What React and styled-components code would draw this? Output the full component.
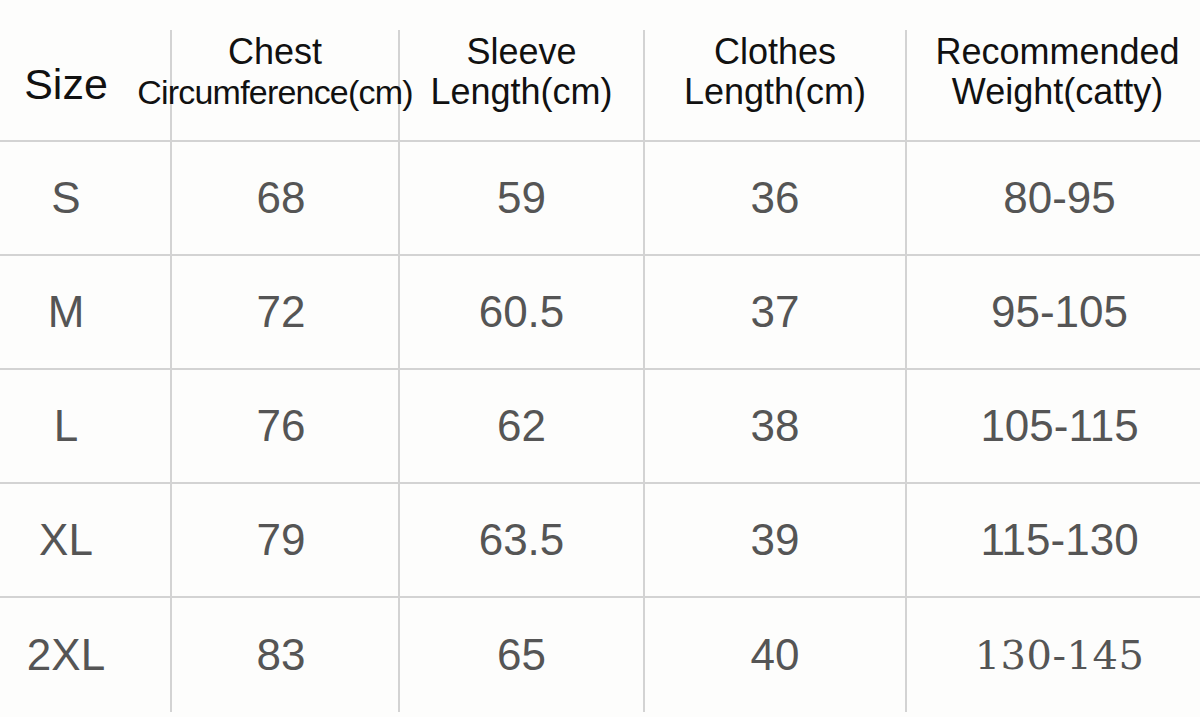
import React from 'react'
import styled, { createGlobalStyle } from 'styled-components'

const GlobalStyle = createGlobalStyle`
  html, body {
    margin: 0;
    padding: 0;
    background: #fdfdfc;
  }
  body {
    font-family: 'Liberation Sans', Arial, sans-serif;
    width: 1200px;
    height: 717px;
    overflow: hidden;
  }
`

const columns = '170px 228px 245px 262px 295px'
const line = '#d3d3d3'

const rows = [
  ['S', '68', '59', '36', '80-95'],
  ['M', '72', '60.5', '37', '95-105'],
  ['L', '76', '62', '38', '105-115'],
  ['XL', '79', '63.5', '39', '115-130'],
  ['2XL', '83', '65', '40', '130-145'],
]

const App = () => {
  return (
    <>
      <GlobalStyle />
      <Chart>
        <HeadRow>
          <SizeHead>Size</SizeHead>
          <HeadCell $shift={-10}>
            <span>Chest</span>
            <Squeezed>Circumference(cm)</Squeezed>
          </HeadCell>
          <HeadCell>
            <span>Sleeve</span>
            <span>Length(cm)</span>
          </HeadCell>
          <HeadCell>
            <span>Clothes</span>
            <span>Length(cm)</span>
          </HeadCell>
          <HeadCell $shift={4}>
            <span>Recommended</span>
            <span>Weight(catty)</span>
          </HeadCell>
        </HeadRow>
        {rows.map((row, i) => (
          <Row key={row[0]} $last={i === rows.length - 1}>
            {row.map((value, j) => (
              <Cell
                key={j}
                $first={j === 0}
                $serif={i === rows.length - 1 && j === 4}
                $shift={j === 4 ? 6 : j === 1 ? -4 : 0}
              >
                {value}
              </Cell>
            ))}
          </Row>
        ))}
      </Chart>
    </>
  )
}

const Chart = styled.div`
  width: 1200px;
  display: flex;
  flex-direction: column;
`

const HeadRow = styled.div`
  display: grid;
  grid-template-columns: ${columns};
  height: 142px;
  border-bottom: 2px solid ${line};
  box-sizing: border-box;
`

const HeadCell = styled.div`
  margin-top: 30px;
  border-left: 2px solid ${line};
  display: flex;
  flex-direction: column;
  align-items: center;
  justify-content: center;
  padding-bottom: 26px;
  padding-left: ${(p) => (p.$shift > 0 ? p.$shift * 2 : 0)}px;
  padding-right: ${(p) => (p.$shift < 0 ? -p.$shift * 2 : 0)}px;
  font-size: 36px;
  line-height: 40px;
  color: #111;
  white-space: nowrap;
`

/* wider than its column: drawn above the neighbouring rules */
const Squeezed = styled.span`
  position: relative;
  z-index: 1;
  font-size: 34px;
  letter-spacing: -0.8px;
`

const SizeHead = styled.div`
  display: flex;
  align-items: center;
  justify-content: center;
  padding: 28px 38px 0 0;
  font-size: 43px;
  color: #111;
`

const Row = styled.div`
  display: grid;
  grid-template-columns: ${columns};
  height: 114px;
  border-bottom: ${(p) => (p.$last ? 'none' : `2px solid ${line}`)};
  box-sizing: border-box;
`

const Cell = styled.div`
  display: flex;
  align-items: center;
  justify-content: center;
  border-left: ${(p) => (p.$first ? 'none' : `2px solid ${line}`)};
  padding-right: ${(p) => (p.$first ? 38 : p.$shift < 0 ? -p.$shift * 2 : 0)}px;
  padding-left: ${(p) => (p.$shift > 0 ? p.$shift * 2 : 0)}px;
  font-family: ${(p) => (p.$serif ? "'DejaVu Serif', 'Liberation Serif', serif" : "'Liberation Sans', Arial, sans-serif")};
  font-size: ${(p) => (p.$serif ? 40 : 44)}px;
  letter-spacing: ${(p) => (p.$serif ? 0.5 : 0)}px;
  color: #555;
`

export default App
